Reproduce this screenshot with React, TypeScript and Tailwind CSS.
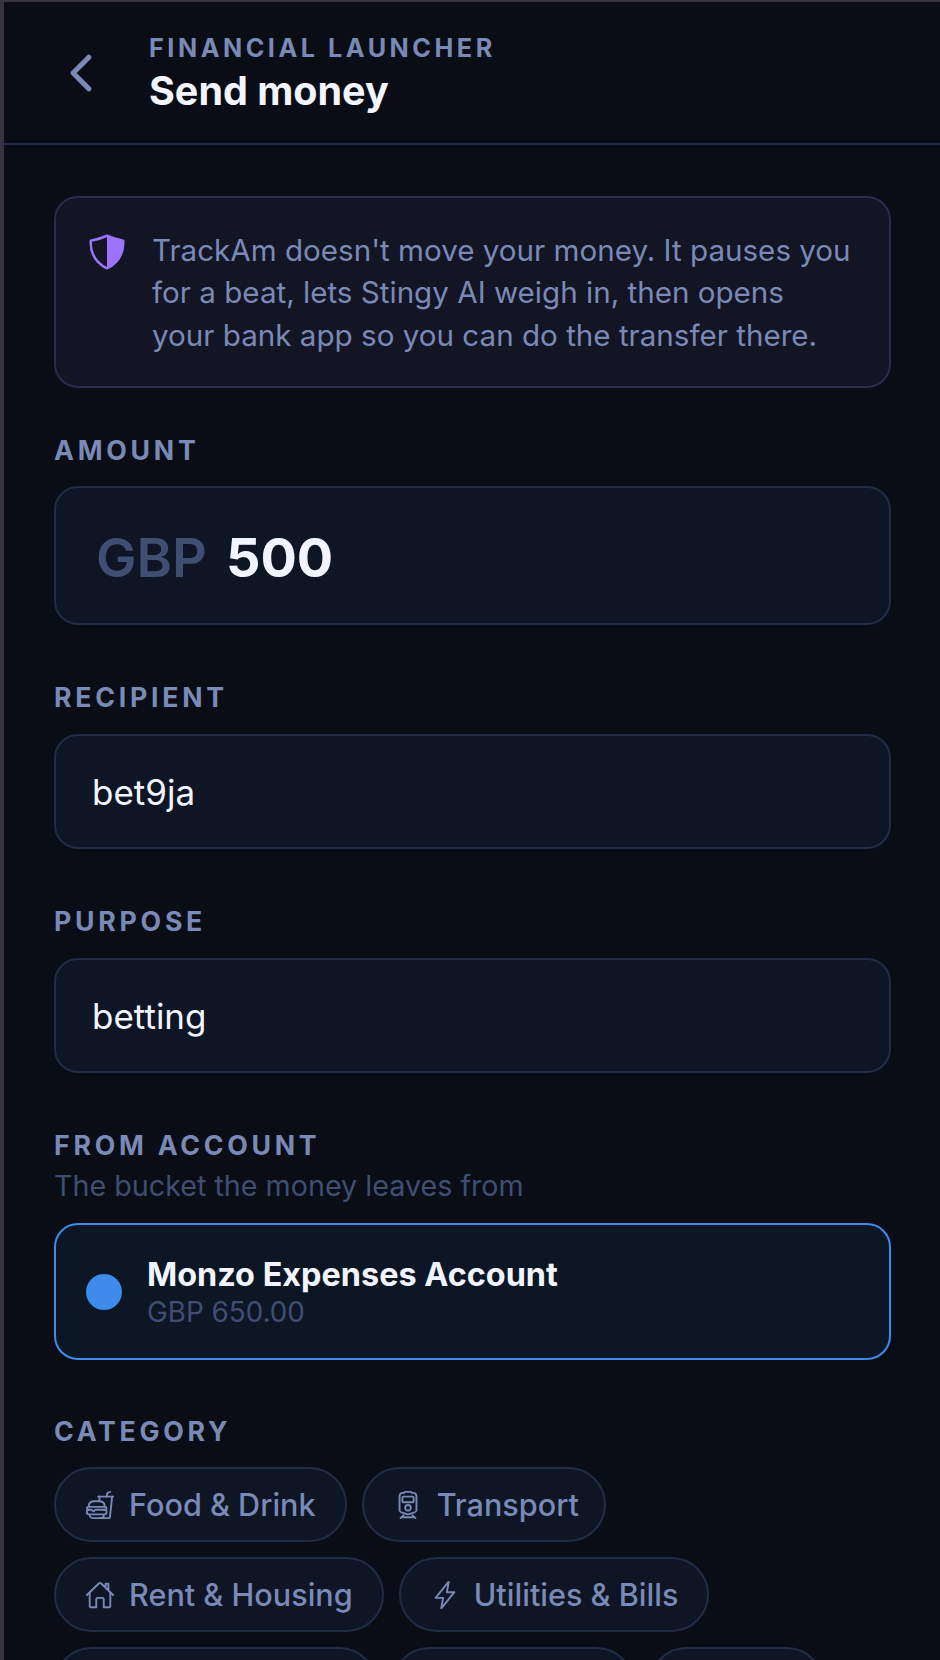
import {
  IoChevronBack,
  IoFastFoodOutline,
  IoFlashOutline,
  IoHomeOutline,
  IoShieldHalf,
  IoTrainOutline,
} from "react-icons/io5";
import type { ReactNode } from "react";

const Label = ({ children }: { children: ReactNode }) => (
  <p className="text-[26.7px] leading-[32px] font-bold tracking-[0.14em] text-[#7a8ab6]">{children}</p>
);

const TextField = ({ label, value }: { label: string; value: string }) => (
  <div className="mt-[56px]">
    <Label>{label}</Label>
    <div className="mt-[21px] h-[115px] rounded-[24px] border-2 border-[#212c49] bg-[#0e1524] px-[36px] pt-[2px] flex items-center text-[35px] text-[#f2f5ff]">
      {value}
    </div>
  </div>
);

const Chip = ({ icon, label, className }: { icon?: ReactNode; label?: string; className?: string }) => (
  <div
    className={`h-[75px] rounded-full border-2 border-[#212c49] bg-[#0e1524] pl-[29px] pr-[29px] pt-[1px] flex items-center gap-[14px] text-[30.6px] font-medium text-[#7a8ab6] ${className ?? ""}`}
  >
    {icon}
    {label && <span>{label}</span>}
  </div>
);

export default function App() {
  return (
    <div
      className="h-[1660px] overflow-hidden bg-[#0a0d15] border-t-2 border-l-4 border-[#37333f]"
      style={{ fontFamily: "Inter, sans-serif" }}
    >
      {/* header */}
      <div className="h-[143px] border-b-2 border-[#212c49] flex items-center pl-[49px]">
        <IoChevronBack className="size-[56px] text-[#7a8ab6]" />
        <div className="ml-[40px] pt-[2px]">
          <p className="text-[25.2px] leading-[30px] font-bold tracking-[0.14em] text-[#7a8ab6]">FINANCIAL LAUNCHER</p>
          <p className="mt-[4px] text-[39.5px] leading-[48px] font-bold text-[#f2f5ff]">Send money</p>
        </div>
      </div>

      <div className="pl-[50px] pr-[49px] pt-[51px]">
        {/* notice */}
        <div className="h-[192px] rounded-[24px] border-2 border-[#2f2850] bg-[#131525] pl-[31px] pt-[31px] flex gap-[25px]">
          <IoShieldHalf className="size-[40px] shrink-0 text-[#9b74fb] mt-[3px]" />
          <p className="max-w-[701px] text-[29.6px] leading-[42.4px] text-[#7a8ab6]">
            TrackAm doesn't move your money. It pauses you for a beat, lets Stingy AI weigh in, then opens your bank app so you can do the transfer there.
          </p>
        </div>

        {/* amount */}
        <div className="mt-[46px]">
          <Label>AMOUNT</Label>
          <div className="mt-[20px] h-[139px] rounded-[24px] border-2 border-[#212c49] bg-[#0e1524] px-[40px] pt-[4px] flex items-center gap-[19px] text-[54px] font-bold">
            <span className="font-semibold text-[#3e4f72]">GBP</span>
            <span className="text-[#f2f5ff]">500</span>
          </div>
        </div>

        <TextField label="RECIPIENT" value="bet9ja" />
        <TextField label="PURPOSE" value="betting" />

        {/* account */}
        <div className="mt-[56px]">
          <Label>FROM ACCOUNT</Label>
          <p className="mt-[8px] text-[28.7px] leading-[34px] text-[#3e4f72]">The bucket the money leaves from</p>
          <div className="mt-[20px] h-[137px] rounded-[24px] border-2 border-[#3d8bea] bg-[#0d1625] pl-[30px] flex items-center gap-[25px]">
            <span className="size-[36px] rounded-full bg-[#3d8bea]" />
            <div>
              <p className="text-[32.4px] leading-[40px] font-bold text-[#f2f5ff]">Monzo Expenses Account</p>
              <p className="text-[27.8px] leading-[34px] text-[#3e4f72]">GBP 650.00</p>
            </div>
          </div>
        </div>

        {/* category */}
        <div className="mt-[55px]">
          <Label>CATEGORY</Label>
          <div className="mt-[20px] flex flex-wrap gap-[15px]">
            <Chip icon={<IoFastFoodOutline className="size-[30px] shrink-0" />} label="Food & Drink" />
            <Chip className="w-[244px]" icon={<IoTrainOutline className="size-[30px] shrink-0" />} label="Transport" />
            <Chip icon={<IoHomeOutline className="size-[30px] shrink-0" />} label="Rent & Housing" />
            <Chip icon={<IoFlashOutline className="size-[30px] shrink-0" />} label="Utilities & Bills" />
            {/* third row only peeks in at the bottom edge */}
            <Chip className="w-[323px]" />
            <Chip className="w-[242px]" />
            <Chip className="w-[175px]" />
          </div>
        </div>
      </div>
    </div>
  );
}
